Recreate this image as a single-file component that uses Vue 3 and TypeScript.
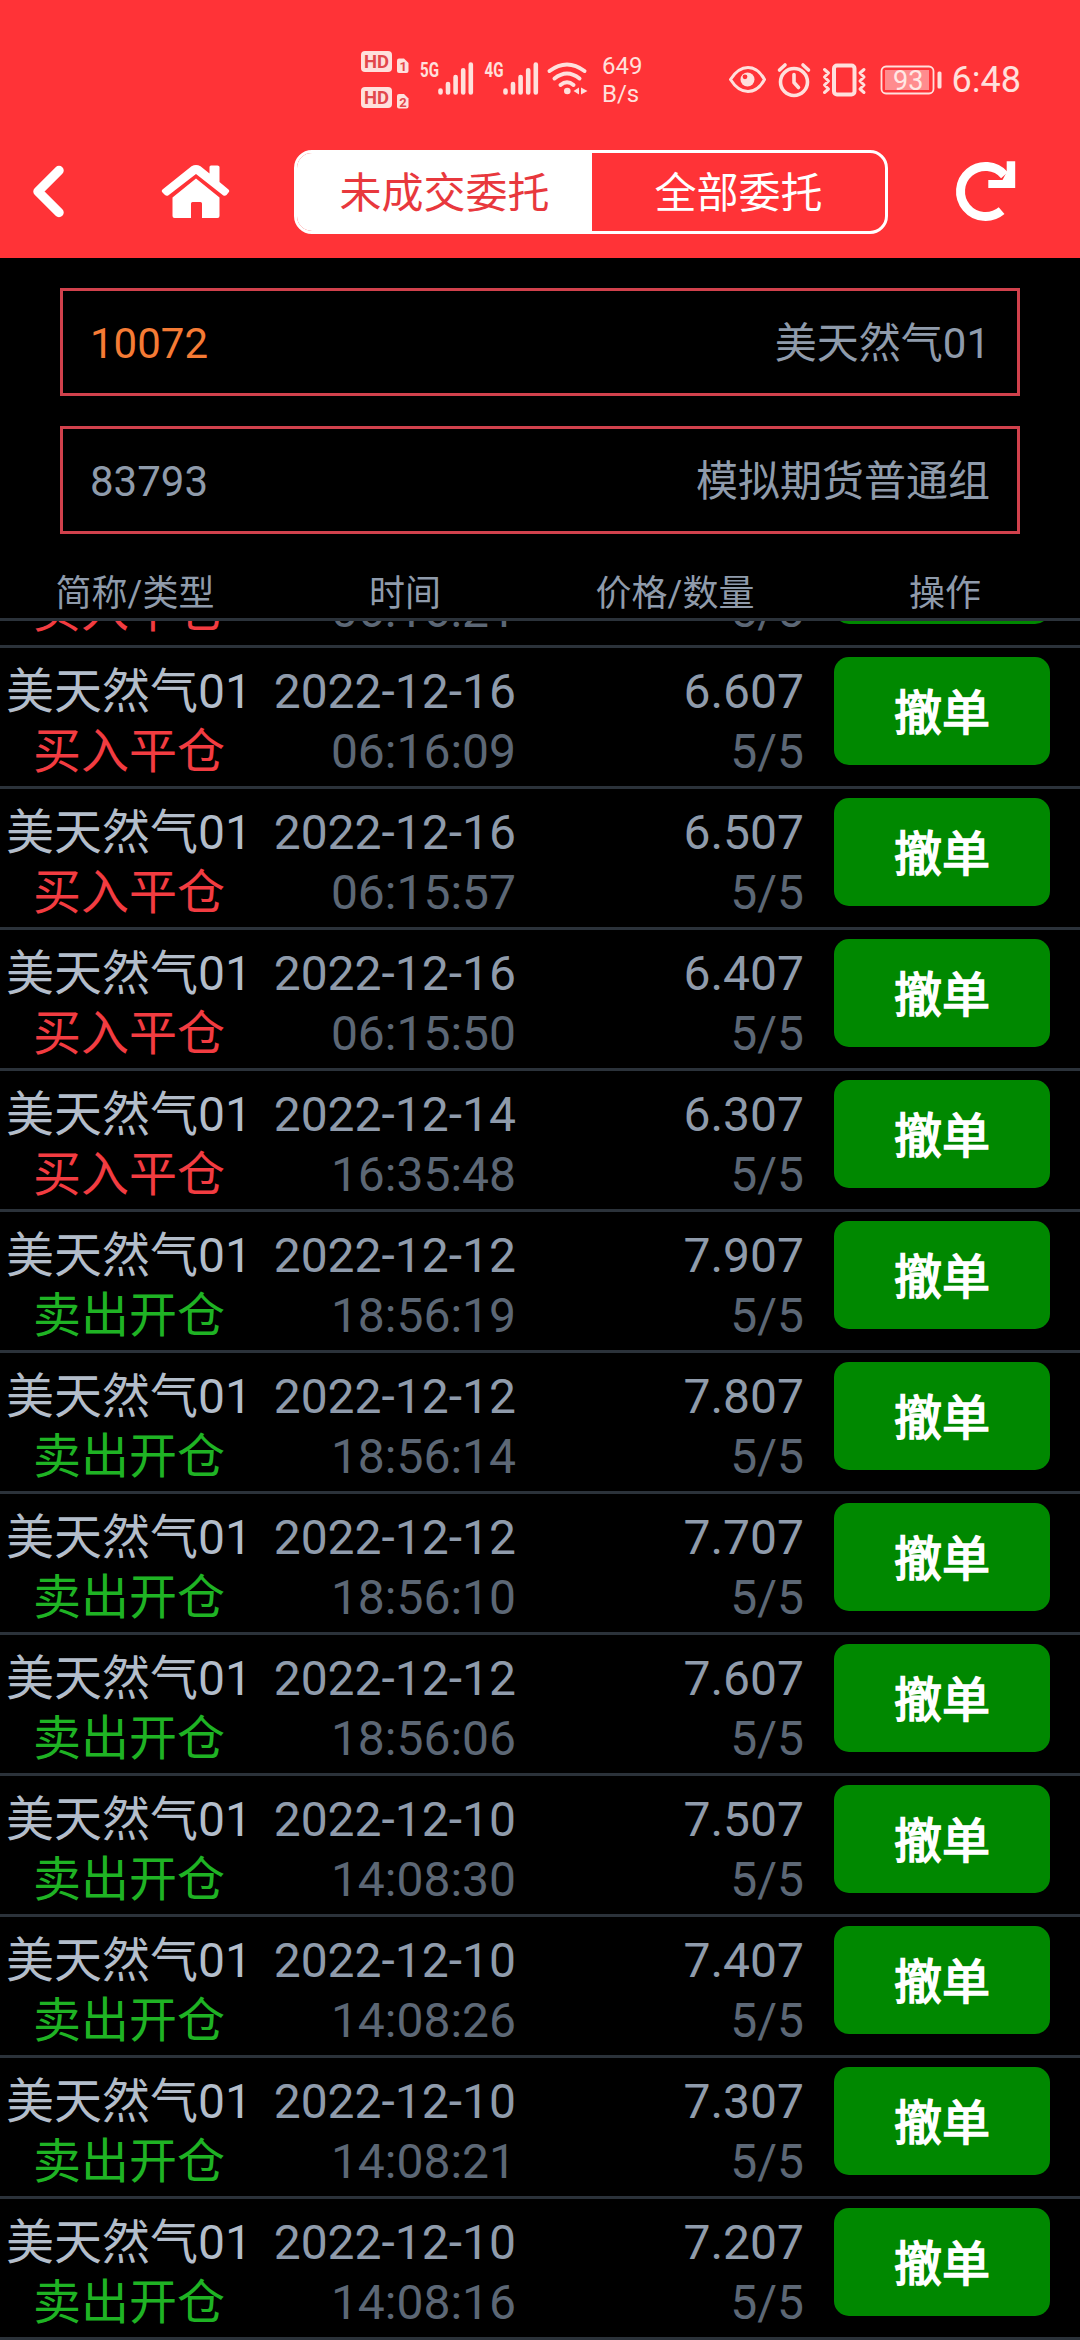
<script setup lang="ts">
interface Order {
  name: string
  side: 'buy' | 'sell'
  type: string
  date: string
  time: string
  price: string
  volume: string
}

const accounts = [
  { id: '10072', label: '美天然气01', active: true },
  { id: '83793', label: '模拟期货普通组', active: false },
]

const columns = ['简称/类型', '时间', '价格/数量', '操作']

function order(side: 'buy' | 'sell', date: string, time: string, price: string): Order {
  return {
    name: '美天然气01',
    side,
    type: side === 'buy' ? '买入平仓' : '卖出开仓',
    date,
    time,
    price,
    volume: '5/5',
  }
}

const orders: Order[] = [
  order('buy', '2022-12-16', '06:16:21', '6.707'),
  order('buy', '2022-12-16', '06:16:09', '6.607'),
  order('buy', '2022-12-16', '06:15:57', '6.507'),
  order('buy', '2022-12-16', '06:15:50', '6.407'),
  order('buy', '2022-12-14', '16:35:48', '6.307'),
  order('sell', '2022-12-12', '18:56:19', '7.907'),
  order('sell', '2022-12-12', '18:56:14', '7.807'),
  order('sell', '2022-12-12', '18:56:10', '7.707'),
  order('sell', '2022-12-12', '18:56:06', '7.607'),
  order('sell', '2022-12-10', '14:08:30', '7.507'),
  order('sell', '2022-12-10', '14:08:26', '7.407'),
  order('sell', '2022-12-10', '14:08:21', '7.307'),
  order('sell', '2022-12-10', '14:08:16', '7.207'),
]
</script>

<template>
  <div class="screen">
    <header class="top">
      <div class="status">
        <svg class="signals" width="232" height="64" viewBox="0 0 232 64">
          <g fill="#ffe0dc">
            <rect x="1" y="3" width="31" height="21" rx="4" />
            <rect x="1" y="39" width="31" height="21" rx="4" />
            <path d="M37 12.500q0-2 2-2h5l4.500 4.500v8q0 2-2 2h-7.500q-2 0-2-2z" />
            <path d="M37 48q0-2 2-2h5l4.500 4.500v8q0 2-2 2h-7.500q-2 0-2-2z" />
          </g>
          <g class="badge-text" fill="#e2474b">
            <text x="4" y="20.300" font-size="19" textLength="25" lengthAdjust="spacingAndGlyphs">HD</text>
            <text x="4" y="56.300" font-size="19" textLength="25" lengthAdjust="spacingAndGlyphs">HD</text>
            <text x="39.500" y="23" font-size="13">1</text>
            <text x="39.300" y="58.500" font-size="13">2</text>
          </g>
          <g class="badge-text" fill="#ffe0dc">
            <text x="60" y="28.500" font-size="20" textLength="19" lengthAdjust="spacingAndGlyphs">5G</text>
            <text x="124.500" y="28.500" font-size="20" textLength="19" lengthAdjust="spacingAndGlyphs">4G</text>
          </g>
          <g stroke="#ffe0dc" stroke-width="4.600" stroke-linecap="round">
            <path d="M80.500 42.500v2M88 36v8.500M95.600 29v15.500M103.200 22.300v22.200M110.800 16.500v28" />
            <path d="M145.500 42.500v2M153 36v8.500M160.600 29v15.500M168.200 22.300v22.200M175.800 16.500v28" />
          </g>
          <g fill="none" stroke="#ffe0dc" stroke-width="4" stroke-linecap="round">
            <path d="M189.500 23q17.500-13 35 0" />
            <path d="M194.500 30.500q12.500-10 25 0" />
            <path d="M200.500 37q6.500-5.500 13 0" />
          </g>
          <circle cx="207.300" cy="43" r="3.300" fill="#ffe0dc" />
          <path d="M219 39.500v7l-5.500-3.500zM221 39.500v7l6.500-3.500z" fill="#ffe0dc" />
        </svg>
        <div class="speed"><span>649</span><span>B/s</span></div>
        <svg class="modes" width="216" height="40" viewBox="0 0 216 40">
          <g fill="none" stroke="#ffe0dc" stroke-width="3" stroke-linejoin="round" stroke-linecap="round">
            <path d="M2.500 19.500Q10 7.500 20 7.500T36.500 19.500Q30 31.500 20 31.500T2.500 19.500z" />
            <circle cx="66" cy="22" r="13.500" stroke-width="3.600" />
            <path d="M51.500 10l5.500-5M80.500 10l-5.500-5" stroke-width="3.600" />
            <path d="M66 14.500v8l4.500 5" stroke-width="3.600" />
            <rect x="106" y="5.500" width="20.500" height="29" rx="3" stroke-width="4" />
            <path d="M96.500 9.500l4 3.500-4 4 4 4-4 4 4 4-4 3.500M136 9.500l-4 3.500 4 4-4 4 4 4-4 4 4 3.500" stroke-width="3" />
            <rect x="153.500" y="6.500" width="52" height="27" rx="4.500" stroke-width="1.800" />
          </g>
          <circle cx="19.500" cy="19.500" r="7" fill="#ffe0dc" />
          <circle cx="17" cy="16.800" r="2.400" fill="#ff3337" />
          <rect x="157" y="10" width="44" height="20" fill="#ff8c8e" />
          <rect x="209.500" y="11.500" width="4" height="17" rx="1.500" fill="#ffe0dc" />
          <text x="165" y="29.500" font-size="27" class="level" fill="#ffe8e5">93</text>
        </svg>
        <span class="clock">6:48</span>
      </div>

      <nav class="bar">
        <button class="icon back" aria-label="返回">
          <svg width="36" height="56" viewBox="0 0 36 56">
            <path d="M29 6.500L8 27.500L29 48.500" fill="none" stroke="#fff" stroke-width="9.500" stroke-linecap="round" stroke-linejoin="round" />
          </svg>
        </button>
        <button class="icon home" aria-label="首页">
          <svg width="70" height="56" viewBox="0 0 70 56" fill="#fff">
            <path d="M1.500 28.500Q0 27 1.500 25.500L30.500 2.300Q35 -.500 39.500 2.300L48.500 9.500V3Q48.500 1.500 50 1.500H56.500Q58.500 1.500 58.500 3V18L67.500 25.500Q69 27 67.500 28.500L65.500 31Q64 32.500 62 31.300L35 10L7.500 31.300Q5.500 32.500 4 31z" />
            <path d="M35 14.500L58.500 33.500V52Q58.500 54 56.500 54H41V39.500Q41 38 39.500 38H31.500Q30 38 30 39.500V54H13.500Q11.500 54 11.500 52V33.500z" />
          </svg>
        </button>
        <div class="tabs">
          <button class="tab on"><span>未成交委托</span></button>
          <button class="tab"><span>全部委托</span></button>
        </div>
        <button class="icon reload" aria-label="刷新">
          <svg width="62" height="64" viewBox="0 0 62 64">
            <path d="M49.500 15.200A25 25 0 1 0 46.600 50.600" fill="none" stroke="#fff" stroke-width="9" />
            <path d="M51.700 1.300H60.200V28H33.300V20H47.500L51.700 12z" fill="#fff" />
          </svg>
        </button>
      </nav>
    </header>

    <section class="accounts">
      <div v-for="a in accounts" :key="a.id" class="account">
        <span :class="{ active: a.active }">{{ a.id }}</span>
        <span>{{ a.label }}</span>
      </div>
    </section>

    <div class="thead">
      <span v-for="c in columns" :key="c">{{ c }}</span>
    </div>

    <main class="list">
      <div class="rows">
        <article v-for="o in orders" :key="o.date + o.time" class="row">
          <div class="cell name">
            <span>{{ o.name }}</span>
            <span :class="o.side">{{ o.type }}</span>
          </div>
          <div class="cell when">
            <span>{{ o.date }}</span>
            <span class="dim">{{ o.time }}</span>
          </div>
          <div class="cell price">
            <span>{{ o.price }}</span>
            <span class="dim">{{ o.volume }}</span>
          </div>
          <button class="cancel">撤单</button>
        </article>
      </div>
    </main>
  </div>
</template>

<style>
body {
  background: #000;
  overflow: hidden;
}
</style>

<style scoped>
.screen {
  width: 1080px;
  height: 2340px;
  display: flex;
  flex-direction: column;
  overflow: hidden;
  background: #000;
  color: #8f9bab;
  font-family: Roboto, 'Noto Sans CJK SC', sans-serif;
}

button {
  margin: 0;
  padding: 0;
  border: 0;
  background: none;
  font: inherit;
}

svg {
  display: block;
}

.top {
  flex: none;
  height: 258px;
  background: #ff3337;
}

.status {
  height: 150px;
  box-sizing: border-box;
  padding: 48px 0 0 360px;
  display: flex;
  align-items: flex-start;
  color: #ffe0dc;
}

.badge-text {
  font-family: Roboto, sans-serif;
  font-weight: 700;
}

.speed {
  width: 40px;
  margin: 4px 0 0 10px;
  display: flex;
  flex-direction: column;
  font-size: 24px;
  line-height: 28px;
}

.modes {
  margin: 12px 0 0 85.5px;
}

.level {
  font-family: Roboto, sans-serif;
}

.clock {
  margin: 11px 0 0 8px;
  font-size: 36px;
  line-height: 42px;
}

.bar {
  height: 84px;
  display: flex;
  align-items: center;
}

.back {
  margin-left: 30px;
}

.home {
  margin-left: 95px;
}

.tabs {
  width: 594px;
  height: 84px;
  box-sizing: border-box;
  margin-left: 63px;
  display: flex;
  border: 3px solid #fff;
  border-radius: 18px;
  overflow: hidden;
}

.tab {
  flex: 1;
  padding-top: 4px;
  color: #fff;
  font-size: 42px;
  line-height: 74px;
}

.tab.on {
  flex: none;
  width: 295px;
  background: #fff;
  color: #e8383d;
}

.reload {
  margin-left: 67px;
}

.accounts {
  flex: none;
  padding: 30px 60px 0;
  display: flex;
  flex-direction: column;
  gap: 30px;
}

.account {
  height: 108px;
  box-sizing: border-box;
  padding: 3px 27px 0;
  display: flex;
  align-items: center;
  justify-content: space-between;
  border: 3px solid #d0414c;
  font-size: 42px;
  line-height: 50px;
}

.active {
  color: #f57b35;
}

.thead {
  flex: none;
  height: 87px;
  box-sizing: border-box;
  padding-top: 35px;
  display: grid;
  grid-template-columns: repeat(4, 270px);
  border-bottom: 3px solid #2b323a;
  font-size: 36px;
  line-height: 49px;
  text-align: center;
}

.thead span {
  padding-top: 1px;
}

.list {
  flex: 1;
  min-height: 0;
  overflow: hidden;
}

/* scroll offset of the order list */
.rows {
  margin-top: -114px;
}

.row {
  height: 141px;
  box-sizing: border-box;
  padding-top: 14px;
  display: flex;
  align-items: flex-start;
  border-bottom: 3px solid #2b323a;
  font-size: 48px;
  line-height: 60px;
}

.cell {
  display: flex;
  flex-direction: column;
  align-items: flex-end;
  white-space: nowrap;
}

.name {
  width: 258px;
  align-items: center;
  color: #b3bdca;
}

.when {
  width: 258px;
}

.price {
  width: 288px;
}

.buy {
  color: #f23c41;
}

.sell {
  color: #1fb324;
}

.dim {
  color: #5c6775;
}

.cancel {
  width: 216px;
  height: 108px;
  margin: -5px 0 0 30px;
  padding-top: 5px;
  border-radius: 15px;
  background: #008800;
  color: #fff;
  -webkit-text-stroke: 1.6px #fff;
}
</style>
